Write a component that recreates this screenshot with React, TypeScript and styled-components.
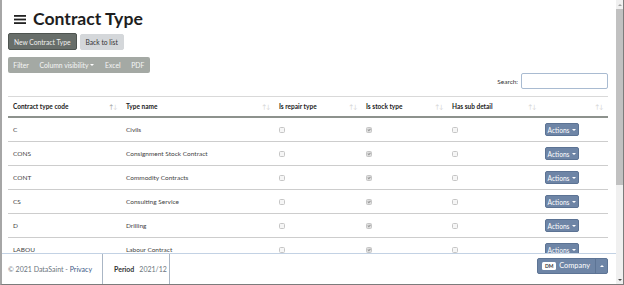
import styled, { createGlobalStyle } from "styled-components";

const GlobalStyle = createGlobalStyle`
  html, body {
    margin: 0;
    padding: 0;
    background: #fff;
  }
  body {
    font-family: Lato, "Open Sans", sans-serif;
  }
`;

type ContractType = {
  code: string;
  name: string;
  repair: boolean;
  stock: boolean;
  sub: boolean;
};

const contractTypes: ContractType[] = [
  { code: "C", name: "Civils", repair: false, stock: true, sub: false },
  { code: "CONS", name: "Consignment Stock Contract", repair: false, stock: true, sub: false },
  { code: "CONT", name: "Commodity Contracts", repair: false, stock: true, sub: false },
  { code: "CS", name: "Consulting Service", repair: false, stock: true, sub: false },
  { code: "D", name: "Drilling", repair: false, stock: true, sub: false },
  { code: "LABOU", name: "Labour Contract", repair: false, stock: true, sub: false },
];

const columns = ["Contract type code", "Type name", "Is repair type", "Is stock type", "Has sub detail", ""];

export default function App() {
  return (
    <>
      <GlobalStyle />
      <Frame>
        <Viewport>
          <Main>
            <TitleRow>
              <Burger width="12" height="9" viewBox="0 0 12 9">
                <rect x="0" y="0" width="12" height="1.8" fill="#222" />
                <rect x="0" y="3.6" width="12" height="1.8" fill="#222" />
                <rect x="0" y="7.2" width="12" height="1.8" fill="#222" />
              </Burger>
              Contract Type
            </TitleRow>
            <ButtonRow>
              <Button $variant="dark">New Contract Type</Button>
              <Button $variant="light">Back to list</Button>
            </ButtonRow>
            <ButtonGroup>
              <GroupButton>Filter</GroupButton>
              <GroupButton>
                Column visibility <Caret />
              </GroupButton>
              <GroupButton>Excel</GroupButton>
              <GroupButton>PDF</GroupButton>
            </ButtonGroup>
            <SearchRow>
              <SearchLabel>Search:</SearchLabel>
              <SearchInput type="search" />
            </SearchRow>
            <Table>
              <HeaderRow>
                {columns.map((col, i) => (
                  <HeadCell key={i}>
                    <span>{col}</span>
                    <SortIcon>
                      <Arrow $active={i === 0}>↑</Arrow>
                      <Arrow>↓</Arrow>
                    </SortIcon>
                  </HeadCell>
                ))}
              </HeaderRow>
              {contractTypes.map((t) => (
                <Row key={t.code}>
                  <Cell>{t.code}</Cell>
                  <Cell>{t.name}</Cell>
                  <Cell>
                    <Checkbox $checked={t.repair} />
                  </Cell>
                  <Cell>
                    <Checkbox $checked={t.stock} />
                  </Cell>
                  <Cell>
                    <Checkbox $checked={t.sub} />
                  </Cell>
                  <Cell>
                    <ActionsButton>
                      Actions <Caret />
                    </ActionsButton>
                  </Cell>
                </Row>
              ))}
            </Table>
          </Main>
          <Footer>
            <Copyright>
              <span>
                © 2021 DataSaint - <FooterLink>Privacy</FooterLink>
              </span>
            </Copyright>
            <PeriodCell>
              <PeriodLabel>Period</PeriodLabel>
              <span>2021/12</span>
            </PeriodCell>
            <Spacer />
            <CompanyArea>
              <SplitButton>
                <CompanyMain>
                  <Badge>DM</Badge>
                  <span>Company</span>
                </CompanyMain>
                <CompanyToggle>
                  <Caret $up />
                </CompanyToggle>
              </SplitButton>
            </CompanyArea>
          </Footer>
        </Viewport>
        <Rail>
          <RailButton>
            <RailArrow $up />
          </RailButton>
          <Thumb />
          <Track />
          <RailButton>
            <RailArrow />
          </RailButton>
        </Rail>
      </Frame>
    </>
  );
}

const Frame = styled.div`
  display: flex;
  width: 624px;
  height: 285px;
  box-sizing: border-box;
  border-left: 2px solid #a6a6a6;
  border-right: 1px solid #7c7c7c;
  border-bottom: 1px solid #7c7c7c;
  overflow: hidden;
`;

const Viewport = styled.div`
  flex: 1;
  min-width: 0;
  display: flex;
  flex-direction: column;
`;

const Main = styled.main`
  flex: 1;
  min-height: 0;
  overflow: hidden;
  padding: 8px 8px 0 6px;
`;

const TitleRow = styled.h1`
  display: flex;
  align-items: center;
  gap: 7px;
  height: 22px;
  margin: 0;
  font-size: 17.6px;
  line-height: 22px;
  font-weight: 700;
  color: #1e1e1e;
`;

const Burger = styled.svg`
  margin-left: 6px;
`;

const ButtonRow = styled.div`
  display: flex;
  align-items: flex-end;
  gap: 3px;
  margin-top: 3px;
  height: 17px;
`;

const Button = styled.button<{ $variant: "dark" | "light" }>`
  box-sizing: border-box;
  height: ${(p) => (p.$variant === "dark" ? "17px" : "16px")};
  padding: 0 5px;
  border-radius: 2px;
  font-family: inherit;
  font-size: 6.7px;
  border: 1px solid ${(p) => (p.$variant === "dark" ? "#4e5450" : "#d4d7da")};
  background: ${(p) => (p.$variant === "dark" ? "#686e6a" : "#d4d7da")};
  color: ${(p) => (p.$variant === "dark" ? "#f0f0f0" : "#333")};
`;

const ButtonGroup = styled.div`
  display: inline-flex;
  height: 16px;
  margin-top: 7px;
  border-radius: 2px;
  background: #a4a9a4;
`;

const GroupButton = styled.span`
  display: flex;
  align-items: center;
  gap: 2px;
  padding: 0 5.3px;
  font-size: 6.8px;
  color: #f6f6f6;
`;

const Caret = styled.span<{ $up?: boolean }>`
  display: inline-block;
  width: 0;
  height: 0;
  border-left: 2px solid transparent;
  border-right: 2px solid transparent;
  ${(p) => (p.$up ? "border-bottom: 2px solid #fff;" : "border-top: 2px solid #fff;")}
`;

const SearchRow = styled.div`
  display: flex;
  justify-content: flex-end;
  align-items: center;
  gap: 3px;
  height: 16px;
`;

const SearchLabel = styled.label`
  font-size: 6.5px;
  color: #333;
`;

const SearchInput = styled.input`
  box-sizing: border-box;
  width: 87px;
  height: 16px;
  margin: 0;
  border: 1px solid #a9bbd1;
  border-radius: 2px;
  outline: none;
`;

const Table = styled.div`
  margin-top: 7px;
`;

const gridColumns = "113px 153px 87px 86px 93px 67px";

const HeaderRow = styled.div`
  display: grid;
  grid-template-columns: ${gridColumns};
  box-sizing: border-box;
  height: 22px;
  border-top: 1px solid #d9d9d9;
  border-bottom: 2px solid #8d928d;
  font-size: 6.5px;
  font-weight: 700;
  color: #222;
`;

const HeadCell = styled.div`
  display: flex;
  align-items: center;
  justify-content: space-between;
  padding: 0 4px 0 5px;
`;

const SortIcon = styled.span`
  display: flex;
  font-size: 6px;
  font-weight: 400;
`;

const Arrow = styled.span<{ $active?: boolean }>`
  color: ${(p) => (p.$active ? "#9a9a9a" : "#d2d2d2")};
  margin-right: -0.5px;
`;

const Row = styled.div`
  display: grid;
  grid-template-columns: ${gridColumns};
  box-sizing: border-box;
  height: 24px;
  border-bottom: 1px solid #cdcdcd;
  font-size: 6.5px;
  color: #444;
`;

const Cell = styled.div`
  display: flex;
  align-items: center;
  padding: 0 4px 0 5px;
`;

const Checkbox = styled.span<{ $checked: boolean }>`
  position: relative;
  box-sizing: border-box;
  width: 6px;
  height: 6px;
  border: 1px solid #c6c6c6;
  border-radius: 1.5px;
  background: ${(p) => (p.$checked ? "#dedede" : "#f6f6f6")};
  ${(p) =>
    p.$checked &&
    `
    &::after {
      content: "";
      position: absolute;
      left: 1px;
      top: 0px;
      width: 1.2px;
      height: 2.4px;
      border-right: 0.8px solid #9a9a9a;
      border-bottom: 0.8px solid #9a9a9a;
      transform: rotate(45deg);
    }
  `}
`;

const ActionsButton = styled.span`
  display: inline-flex;
  align-items: center;
  justify-content: center;
  gap: 3px;
  box-sizing: border-box;
  width: 34px;
  height: 13px;
  border: 1px solid #5c7394;
  border-radius: 2px;
  background: #6e85a6;
  color: #fff;
  font-size: 6.6px;
`;

const Footer = styled.footer`
  flex-shrink: 0;
  display: flex;
  box-sizing: border-box;
  height: 31px;
  border-top: 1px solid #c3d2e4;
  background: #fff;
  font-size: 7px;
  line-height: 10px;
  color: #6c757d;
`;

const Copyright = styled.div`
  display: flex;
  align-items: center;
  padding: 0 10px 0 6px;
  white-space: nowrap;
`;

const FooterLink = styled.a`
  color: #3d5a85;
`;

const PeriodCell = styled.div`
  display: flex;
  align-items: center;
  gap: 5px;
  padding: 0 2px 0 11px;
  white-space: nowrap;
  border-left: 1px solid #aab6c5;
  border-right: 1px solid #aab6c5;
`;

const PeriodLabel = styled.span`
  font-weight: 700;
  color: #333;
`;

const Spacer = styled.div`
  flex: 1;
`;

const CompanyArea = styled.div`
  padding: 4px 8px 0 0;
`;

const SplitButton = styled.div`
  display: flex;
  box-sizing: border-box;
  height: 16px;
  border: 1px solid #5d7495;
  border-radius: 2px;
  background: #6e85a6;
  color: #fff;
`;

const CompanyMain = styled.div`
  display: flex;
  align-items: center;
  gap: 3px;
  padding: 0 5px 0 4px;
  font-size: 7.4px;
  white-space: nowrap;
`;

const Badge = styled.span`
  display: flex;
  align-items: center;
  justify-content: center;
  width: 14px;
  height: 8px;
  border-radius: 1.5px;
  background: #fff;
  color: #333;
  font-size: 5px;
  line-height: 8px;
  font-weight: 700;
`;

const CompanyToggle = styled.div`
  display: flex;
  align-items: center;
  justify-content: center;
  width: 11px;
  border-left: 1px solid #5d7495;
`;

const Rail = styled.div`
  display: flex;
  flex-direction: column;
  width: 7px;
  background: #f0f0f0;
`;

const RailButton = styled.div`
  display: flex;
  align-items: center;
  justify-content: center;
  height: 9px;
`;

const RailArrow = styled.span<{ $up?: boolean }>`
  width: 0;
  height: 0;
  border-left: 2px solid transparent;
  border-right: 2px solid transparent;
  ${(p) => (p.$up ? "border-bottom: 2px solid #a3a3a3;" : "border-top: 2px solid #505050;")}
`;

const Thumb = styled.div`
  height: 176px;
  background: #c1c1c1;
`;

const Track = styled.div`
  flex: 1;
`;
